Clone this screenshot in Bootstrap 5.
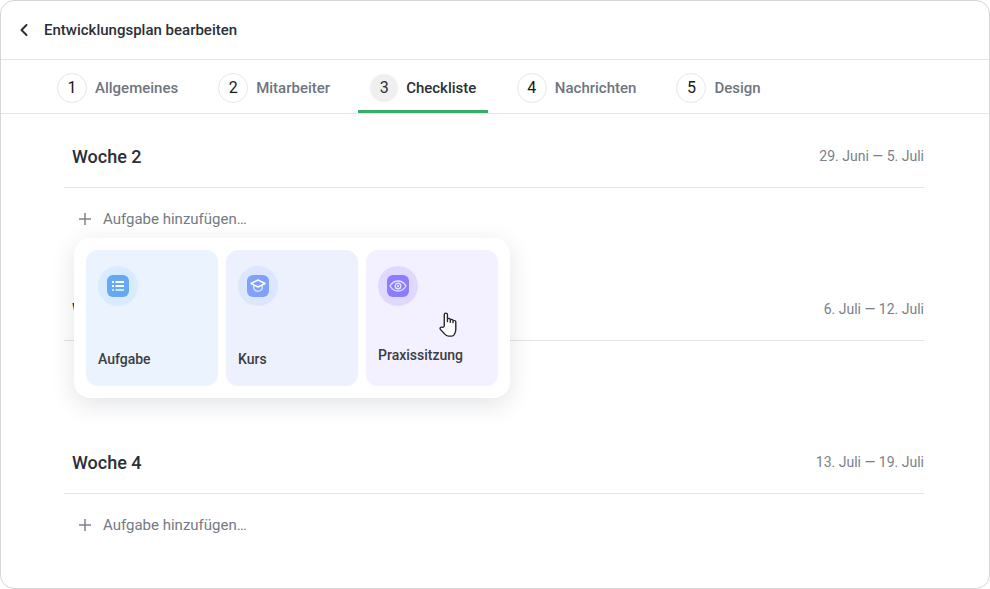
<!DOCTYPE html>
<html lang="de">
<head>
    <meta charset="UTF-8">
    <meta name="viewport" content="width=device-width, initial-scale=1.0">
    <title>Entwicklungsplan bearbeiten</title>
    <link href="https://cdn.jsdelivr.net/npm/bootstrap@5.3.0/dist/css/bootstrap.min.css" rel="stylesheet">
    <style>
        html, body {
            height: 100%;
            overflow: hidden;
        }
        body {
            background: #fff;
            font-family: Roboto, "Liberation Sans", sans-serif;
            color: #2b2f36;
        }
        .plan-frame {
            height: 589px;
            border: 1px solid #d6d6d6;
            border-radius: 14px;
            overflow: hidden;
        }
        .plan-top {
            height: 59px;
            padding-left: 17px;
            gap: 14px;
            border-bottom: 1px solid #e4e4e4;
            font-size: 15px;
            font-weight: 500;
        }
        .step-bar {
            height: 54px;
            padding-left: 44px;
            gap: 16px;
            border-bottom: 1px solid #e4e4e4;
        }
        .step-tab {
            padding: 3px 12px 0;
            gap: 8px;
            font-size: 15px;
            font-weight: 500;
            color: #6f7580;
        }
        .step-tab.is-active {
            color: #2b2f36;
            box-shadow: inset 0 -3px 0 #3aaa6a;
            margin-right: .5px;
        }
        .step-num {
            width: 30px;
            height: 30px;
            border: 1px solid #e6e6e6;
            border-radius: 50%;
            font-size: 16px;
            font-weight: 400;
            color: #16181c;
        }
        .is-active .step-num {
            width: 28px;
            height: 28px;
            border: 0;
            background: #efefef;
            color: #2b2f36;
        }
        .week-list {
            padding: 0 65px 0 63px;
        }
        .week-box {
            height: 153px;
        }
        .week-head {
            height: 74px;
            padding: 13px 0 1px 8px;
            border-bottom: 1px solid #e4e4e4;
        }
        .week-title {
            font-size: 18px;
            font-weight: 500;
            color: #2b2f36;
        }
        .week-date {
            font-size: 14px;
            color: #7a7f88;
        }
        .add-row {
            padding: 20px 0 0 15px;
            gap: 12px;
            font-size: 15px;
            line-height: 22px;
            color: #747a84;
        }
        .add-menu {
            position: absolute;
            top: 124px;
            left: 10px;
            width: 436px;
            height: 160px;
            padding: 12px;
            gap: 8px;
            background: #fff;
            border-radius: 16px;
            box-shadow: 0 6px 24px rgba(30, 40, 60, .13);
            z-index: 5;
        }
        .add-item {
            position: relative;
            width: 132px;
            padding: 16px 12px;
            border-radius: 12px;
            font-size: 14px;
            font-weight: 500;
            color: #3a3d44;
        }
        .add-item.tone-task { background: #ebf3ff; }
        .add-item.tone-course { background: #edf1fe; }
        .add-item.tone-practice { background: #f3f0ff; }
        .icon-ring {
            width: 40px;
            height: 40px;
            border-radius: 50%;
        }
        .icon-tile {
            width: 22px;
            height: 22px;
            border-radius: 6px;
        }
        .tone-task .icon-ring { background: #d8ebff; }
        .tone-task .icon-tile { background: #65a9f2; }
        .tone-course .icon-ring { background: #dce6ff; }
        .tone-course .icon-tile { background: #7fa1f8; }
        .tone-practice .icon-ring { background: #e0d9ff; }
        .tone-practice .icon-tile { background: #8a7dff; }
        .add-label {
            margin-top: 44px;
            line-height: 18px;
        }
        .tone-practice .add-label {
            margin-top: 40px;
        }
        .hand-cursor {
            position: absolute;
            left: 73px;
            top: 62px;
        }
    </style>
</head>
<body>
    <div class="plan-frame bg-white">
        <div class="plan-top d-flex align-items-center">
            <svg width="12" height="14" viewBox="0 0 12 14" fill="none" stroke="#2b2f36" stroke-width="2" stroke-linecap="round" stroke-linejoin="round"><path d="M8.500 2 3.500 7l5 5"/></svg>
            <span>Entwicklungsplan bearbeiten</span>
        </div>

        <div class="step-bar d-flex">
            <div class="step-tab d-flex align-items-center"><span class="step-num d-flex align-items-center justify-content-center">1</span>Allgemeines</div>
            <div class="step-tab d-flex align-items-center"><span class="step-num d-flex align-items-center justify-content-center">2</span>Mitarbeiter</div>
            <div class="step-tab is-active d-flex align-items-center"><span class="step-num d-flex align-items-center justify-content-center">3</span>Checkliste</div>
            <div class="step-tab d-flex align-items-center"><span class="step-num d-flex align-items-center justify-content-center">4</span>Nachrichten</div>
            <div class="step-tab d-flex align-items-center"><span class="step-num d-flex align-items-center justify-content-center">5</span>Design</div>
        </div>

        <div class="week-list">
            <div class="week-box position-relative">
                <div class="week-head d-flex align-items-center justify-content-between">
                    <span class="week-title">Woche 2</span>
                    <span class="week-date">29. Juni — 5. Juli</span>
                </div>
                <div class="add-row d-flex align-items-center">
                    <svg width="12" height="12" viewBox="0 0 12 12" stroke="#7d828b" stroke-width="1.5"><path d="M6 0v12M0 6h12"/></svg>
                    <span>Aufgabe hinzufügen…</span>
                </div>

                <div class="add-menu d-flex">
                    <div class="add-item tone-task">
                        <div class="icon-ring d-flex align-items-center justify-content-center">
                            <div class="icon-tile d-flex align-items-center justify-content-center">
                                <svg width="14" height="12" viewBox="0 0 14 12" fill="#fff"><path d="M1 1h2v2H1zM4.500 1H13v2H4.500zM1 5h2v2H1zM4.500 5H13v2H4.500z"/><path opacity=".7" d="M1 9h2v2H1zM4.500 9H13v2H4.500z"/></svg>
                            </div>
                        </div>
                        <div class="add-label">Aufgabe</div>
                    </div>
                    <div class="add-item tone-course">
                        <div class="icon-ring d-flex align-items-center justify-content-center">
                            <div class="icon-tile d-flex align-items-center justify-content-center">
                                <svg width="16" height="14" viewBox="0 0 16 14" fill="none" stroke="#fff" stroke-width="1.4" stroke-linejoin="round"><path d="M8 1 15 4.500 8 8 1 4.500z"/><path opacity=".7" d="M3.800 6.500v3.300C5 11.500 6.500 12.300 8 12.300s3-.8 4.200-2.500V6.500"/></svg>
                            </div>
                        </div>
                        <div class="add-label">Kurs</div>
                    </div>
                    <div class="add-item tone-practice">
                        <div class="icon-ring d-flex align-items-center justify-content-center">
                            <div class="icon-tile d-flex align-items-center justify-content-center">
                                <svg width="18" height="12" viewBox="0 0 18 12" fill="none" stroke="#e6e2ff" stroke-width="1.3"><path d="M1 6c2-3.300 4.700-5 8-5s6 1.700 8 5c-2 3.300-4.700 5-8 5s-6-1.700-8-5z"/><circle cx="9" cy="6" r="2.800" stroke-width="1.400"/><circle cx="9" cy="6" r="1" fill="#fff" stroke="none"/></svg>
                            </div>
                        </div>
                        <div class="add-label">Praxissitzung</div>
                        <svg class="hand-cursor" width="19" height="25" viewBox="0 0 18 27" preserveAspectRatio="none" fill="#fff" stroke="#23262b" stroke-width="1.300" stroke-linejoin="round" stroke-linecap="round"><path d="M5 15.500V3c0-2.400 3-2.400 3 0v7.500V8.200c0-1.800 2.700-1.800 2.700 0v3-2c0-1.700 2.600-1.700 2.600 0v2.300-1.200c0-1.600 2.600-1.500 2.600.2V19c0 2.500-.5 4-1.500 5.500-.6 1-1.300 1.500-2.500 1.500H9c-1.500 0-2.500-.7-3.500-2l-4-5c-1.300-1.700 .5-3.700 2-2.300z"/></svg>
                    </div>
                </div>
            </div>

            <div class="week-box">
                <div class="week-head d-flex align-items-center justify-content-between">
                    <span class="week-title">Woche 3</span>
                    <span class="week-date">6. Juli — 12. Juli</span>
                </div>
            </div>

            <div class="week-box">
                <div class="week-head d-flex align-items-center justify-content-between">
                    <span class="week-title">Woche 4</span>
                    <span class="week-date">13. Juli — 19. Juli</span>
                </div>
                <div class="add-row d-flex align-items-center">
                    <svg width="12" height="12" viewBox="0 0 12 12" stroke="#7d828b" stroke-width="1.5"><path d="M6 0v12M0 6h12"/></svg>
                    <span>Aufgabe hinzufügen…</span>
                </div>
            </div>
        </div>
    </div>

    <script src="https://cdn.jsdelivr.net/npm/bootstrap@5.3.0/dist/js/bootstrap.bundle.min.js"></script>
</body>
</html>
